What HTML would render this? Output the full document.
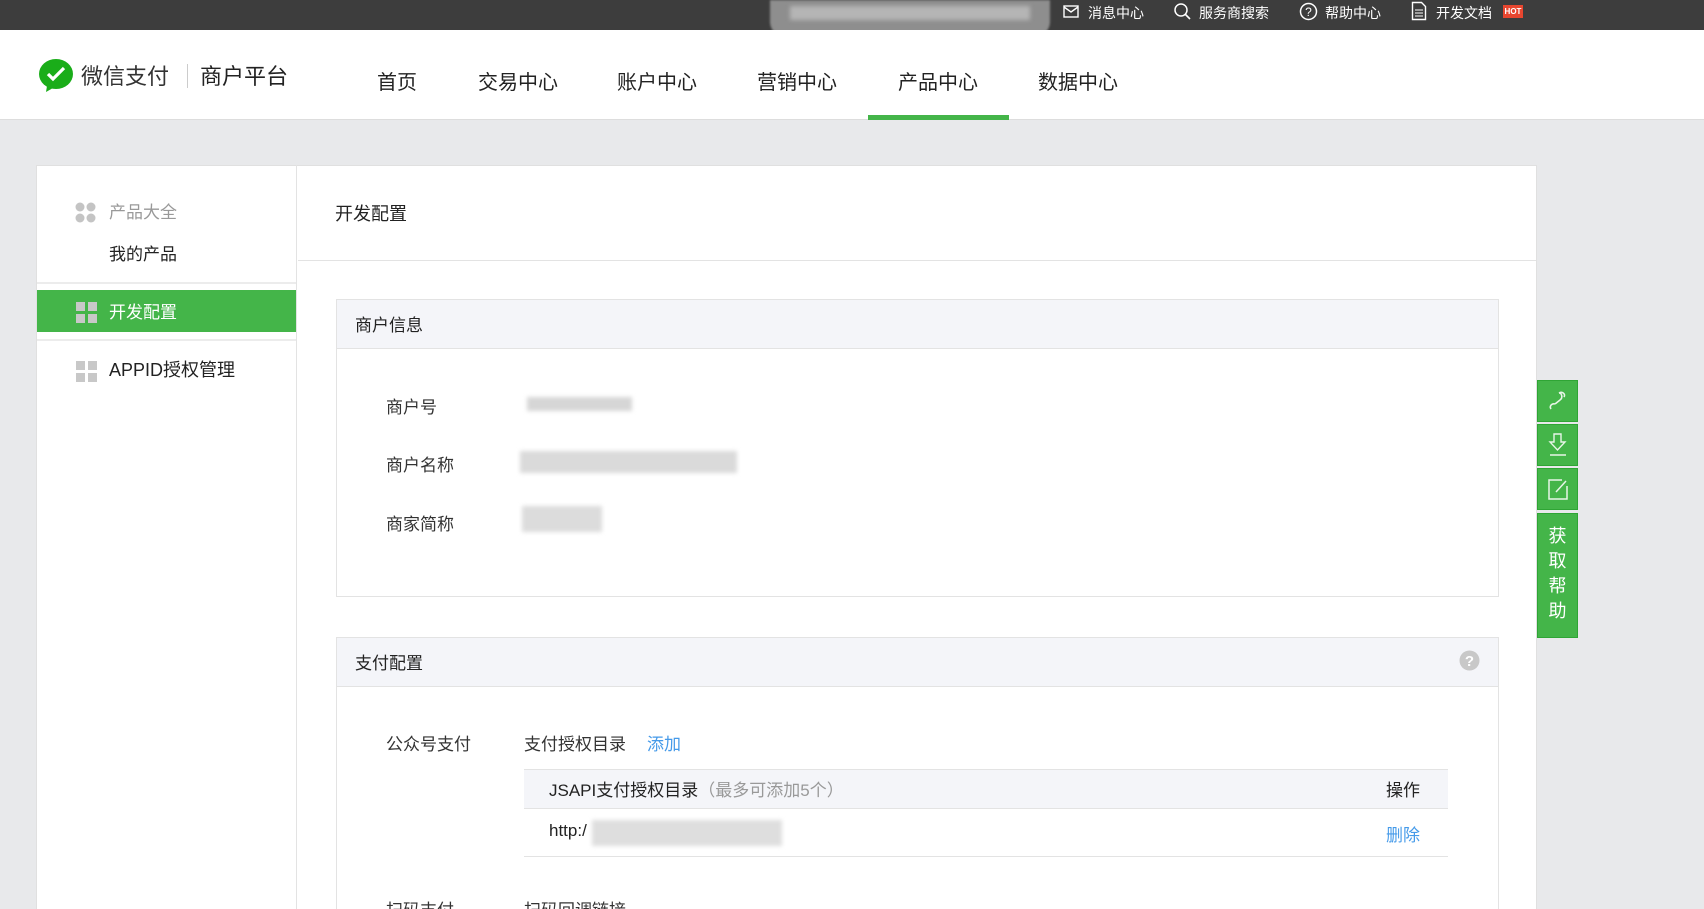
<!DOCTYPE html>
<html style="height:909px;overflow:hidden"><head><meta charset="utf-8"><style>
*{margin:0;padding:0;box-sizing:border-box}
body{width:1704px;height:909px;overflow:hidden;background:#e8e9eb;font-family:"Liberation Sans","Noto Sans CJK SC",sans-serif;color:#333;position:relative}
.a{position:absolute;white-space:nowrap}
.top{position:absolute;left:0;top:0;width:1704px;height:30px;background:#3d3d3d}
.top .a{color:#fff;font-size:14px;top:3px}
.hdr{position:absolute;left:0;top:30px;width:1704px;height:90px;background:#fff;border-bottom:1px solid #ddd}
.nav{font-size:20px;color:#222;top:66px}
.panel{position:absolute;left:36px;top:165px;width:1501px;height:744px;background:#fff;border:1px solid #e0e0e0;border-bottom:none}
.side{position:absolute;left:36px;top:165px;width:261px;height:744px;border-right:1px solid #e3e3e3}
.sec{position:absolute;left:336px;width:1163px;border:1px solid #e3e3e3;background:#fff}
.sec .h{height:49px;background:#f4f5f9;border-bottom:1px solid #e3e3e3;font-size:17px;padding:11px 0 0 18px;color:#222}
.lbl{font-size:17px;color:#333}
.blur{position:absolute;background:#d6d6d6;filter:blur(2px)}
.fb{position:absolute;left:1537px;width:41px;background:#44b549;border:1px solid #2fa535}
</style></head><body>
<div class="top"></div>
<div class="a" style="left:770px;top:0;width:280px;height:36px;background:#8e8e8e;border-radius:0 0 14px 14px;filter:blur(1px)"></div>
<div class="a" style="left:790px;top:6px;width:240px;height:14px;background:#b5b5b5;filter:blur(2px)"></div>
<div class="top" style="background:none">
<svg class="a" style="left:1063px;top:4px" width="16" height="15"><rect x="1" y="2" width="14" height="11" fill="none" stroke="#fff" stroke-width="1.4"/><path d="M1 3l7 5 7-5" fill="none" stroke="#fff" stroke-width="1.4"/></svg>
<div class="a" style="left:1088px">消息中心</div>
<svg class="a" style="left:1173px;top:2px" width="18" height="19"><circle cx="8" cy="8" r="6" fill="none" stroke="#fff" stroke-width="1.5"/><path d="M12 12l5 5" stroke="#fff" stroke-width="1.6"/></svg>
<div class="a" style="left:1199px">服务商搜索</div>
<svg class="a" style="left:1299px;top:2px" width="19" height="19"><circle cx="9.5" cy="9.5" r="8" fill="none" stroke="#fff" stroke-width="1.5"/><text x="9.5" y="14" fill="#fff" font-size="12" text-anchor="middle" font-family="Liberation Sans">?</text></svg>
<div class="a" style="left:1325px">帮助中心</div>
<svg class="a" style="left:1411px;top:1px" width="16" height="20"><path d="M1.5 1.5h9l4 4v13h-13z" fill="none" stroke="#fff" stroke-width="1.4"/><path d="M4 9h8M4 12h8M4 15h8" stroke="#fff"/></svg>
<div class="a" style="left:1436px">开发文档</div>
<div class="a" style="left:1503px;top:5px;width:20px;height:13px;background:#e8462f;color:#fff;font-size:8px;line-height:13px;text-align:center;font-weight:bold">HOT</div>
</div>
<div class="hdr"></div>
<svg class="a" style="left:39px;top:59px" width="36" height="33"><ellipse cx="17" cy="15" rx="17" ry="15" fill="#1aad19"/><path d="M8 27l-1 6 7-4z" fill="#1aad19"/><path d="M9 15l5 5 11-11" fill="none" stroke="#fff" stroke-width="3.2"/></svg>
<div class="a" style="left:81px;top:59px;font-size:22px;color:#333">微信支付</div>
<div class="a" style="left:187px;top:64px;width:1px;height:24px;background:#ccc"></div>
<div class="a" style="left:200px;top:59px;font-size:22px;color:#222">商户平台</div>
<div class="a nav" style="left:377px">首页</div>
<div class="a nav" style="left:478px">交易中心</div>
<div class="a nav" style="left:617px">账户中心</div>
<div class="a nav" style="left:757px">营销中心</div>
<div class="a nav" style="left:898px">产品中心</div>
<div class="a nav" style="left:1038px">数据中心</div>
<div class="a" style="left:868px;top:115px;width:141px;height:5px;background:#44b549"></div>

<div class="panel"></div>
<div class="side"></div>
<svg class="a" style="left:75px;top:202px" width="21" height="21"><g fill="#c4c4c4"><circle cx="5" cy="5" r="4.5"/><circle cx="16" cy="5" r="4.5"/><circle cx="5" cy="16" r="4.5"/><circle cx="16" cy="16" r="4.5"/></g></svg>
<div class="a" style="left:109px;top:198px;font-size:17px;color:#999">产品大全</div>
<div class="a" style="left:109px;top:240px;font-size:17px;color:#222">我的产品</div>
<div class="a" style="left:37px;top:282px;width:259px;height:2px;background:#ececec"></div>
<div class="a" style="left:37px;top:290px;width:259px;height:42px;background:#44b549"></div>
<svg class="a" style="left:76px;top:302px" width="21" height="21"><g fill="#c8c8c8"><rect width="9" height="9"/><rect x="12" width="9" height="9"/><rect y="12" width="9" height="9"/><rect x="12" y="12" width="9" height="9"/></g></svg>
<div class="a" style="left:109px;top:298px;font-size:17px;color:#fff">开发配置</div>
<div class="a" style="left:37px;top:339px;width:259px;height:2px;background:#ececec"></div>
<svg class="a" style="left:76px;top:361px" width="21" height="21"><g fill="#c8c8c8"><rect width="9" height="9"/><rect x="12" width="9" height="9"/><rect y="12" width="9" height="9"/><rect x="12" y="12" width="9" height="9"/></g></svg>
<div class="a" style="left:109px;top:356px;font-size:18px;color:#222">APPID授权管理</div>

<div class="a" style="left:335px;top:200px;font-size:18px;color:#222">开发配置</div>
<div class="a" style="left:298px;top:260px;width:1238px;height:1px;background:#e3e3e3"></div>

<div class="sec" style="top:299px;height:298px"><div class="h">商户信息</div></div>
<div class="a lbl" style="left:386px;top:393px">商户号</div>
<div class="a lbl" style="left:386px;top:451px">商户名称</div>
<div class="a lbl" style="left:386px;top:510px">商家简称</div>
<div class="blur" style="left:527px;top:397px;width:105px;height:14px"></div>
<div class="blur" style="left:520px;top:451px;width:217px;height:22px;background:#dadada"></div>
<div class="blur" style="left:522px;top:506px;width:80px;height:26px;background:#dcdcdc"></div>

<div class="sec" style="top:637px;height:300px"><div class="h">支付配置</div></div>
<svg class="a" style="left:1459px;top:650px" width="21" height="21"><circle cx="10.5" cy="10.5" r="10" fill="#c8c8c8"/><text x="10.5" y="16" fill="#fff" font-size="15" font-weight="bold" text-anchor="middle" font-family="Liberation Sans">?</text></svg>
<div class="a lbl" style="left:386px;top:730px">公众号支付</div>
<div class="a lbl" style="left:524px;top:730px">支付授权目录</div>
<div class="a lbl" style="left:647px;top:730px;color:#459ae9">添加</div>
<div class="a" style="left:524px;top:769px;width:924px;height:40px;background:#f4f5f9;border-top:1px solid #e3e3e3;border-bottom:1px solid #e3e3e3"></div>
<div class="a lbl" style="left:549px;top:776px;color:#222">JSAPI支付授权目录<span style="color:#999">（最多可添加5个）</span></div>
<div class="a lbl" style="left:1386px;top:776px;color:#222">操作</div>
<div class="a lbl" style="left:549px;top:821px;color:#222">http:/</div>
<div class="blur" style="left:592px;top:820px;width:190px;height:26px;background:#dedede"></div>
<div class="a lbl" style="left:1386px;top:821px;color:#459ae9">删除</div>
<div class="a" style="left:524px;top:856px;width:924px;height:1px;background:#e3e3e3"></div>
<div class="a lbl" style="left:386px;top:896px">扫码支付</div>
<div class="a lbl" style="left:524px;top:896px">扫码回调链接</div>

<div class="fb" style="top:380px;height:42px"><svg width="39" height="40"><path d="M13 28c-2-3 1-6 4-5M17 23l5 -4c3-2 2-7-1-7M21 12c3-2 7 1 5 4" fill="none" stroke="#e8f5e8" stroke-width="1.6"/></svg></div>
<div class="fb" style="top:424px;height:42px"><svg width="39" height="40"><path d="M16 9h7v8h4l-7.5 8-7.5-8h4z" fill="none" stroke="#e8f5e8" stroke-width="1.4"/><path d="M12 30h16" stroke="#e8f5e8" stroke-width="1.5"/></svg></div>
<div class="fb" style="top:468px;height:42px"><svg width="39" height="40"><path d="M24 11h-13v19h18v-13" fill="none" stroke="#e8f5e8" stroke-width="1.5"/><path d="M18 23l10-11" stroke="#e8f5e8" stroke-width="1.5"/></svg></div>
<div class="fb" style="top:513px;height:125px;color:#fff;font-size:18px;line-height:25px;text-align:center;padding-top:10px">获<br>取<br>帮<br>助</div>
</body></html>
